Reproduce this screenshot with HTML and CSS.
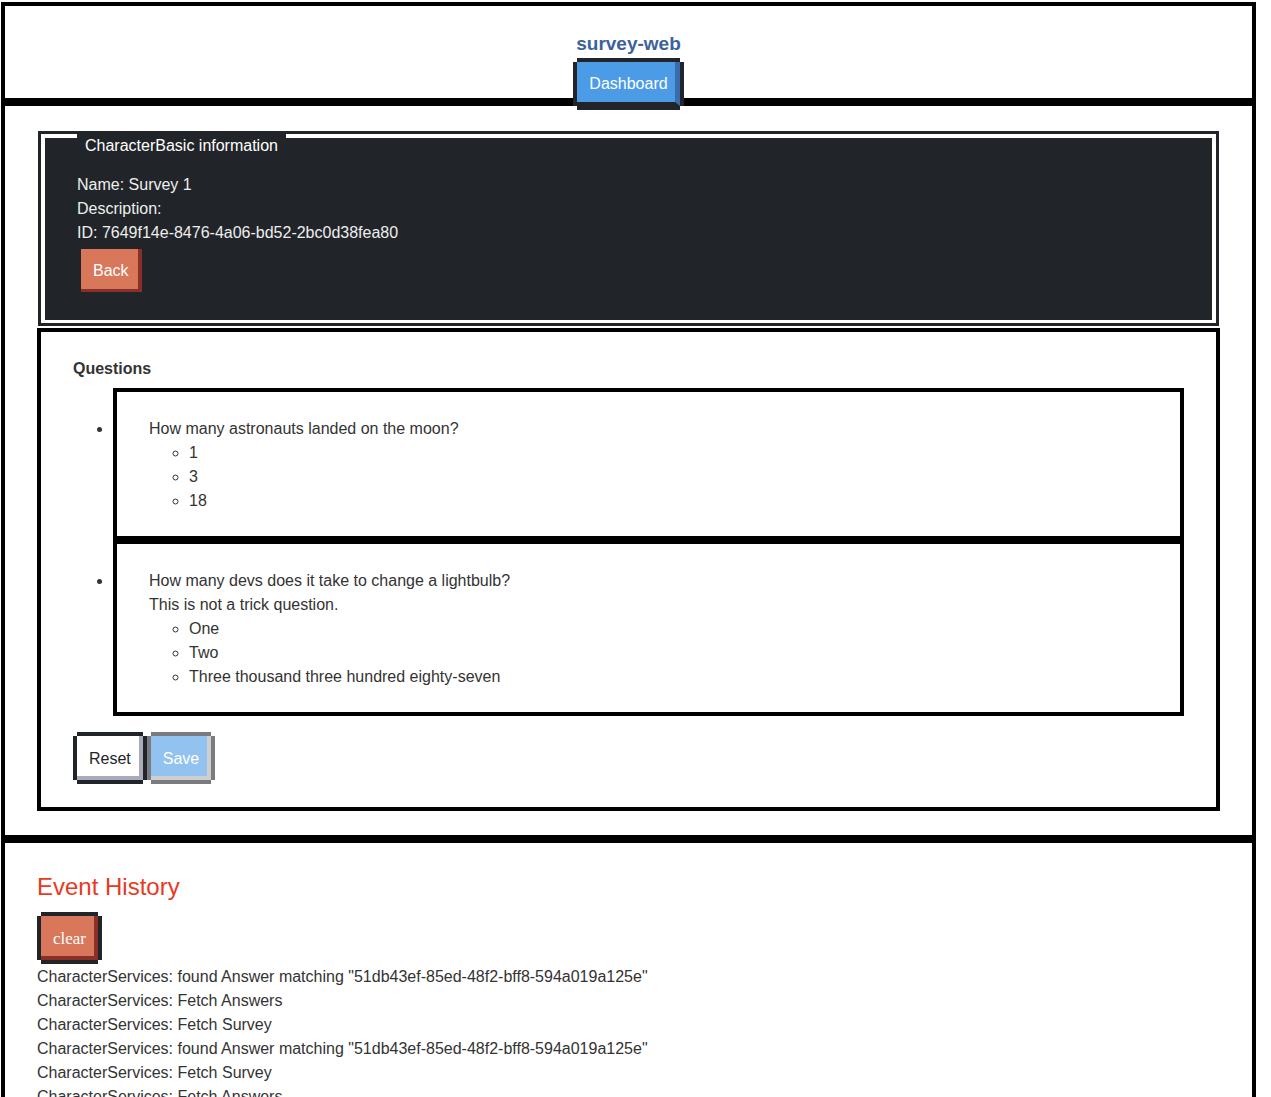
FILE: index.html
```html
<!DOCTYPE html>
<html lang="en">
<head>
<meta charset="utf-8">
<title>survey-web</title>
<link rel="stylesheet" href="styles.css">
</head>
<body>
<div class="page">
  <header class="section header">
    <div class="app-title">survey-web</div>
    <button class="btn btn-blue btn-nav">Dashboard</button>
  </header>

  <main class="section main">
    <div class="info-card">
      <div class="info-inner">
        <div class="legend">CharacterBasic information</div>
        <div class="line">Name: Survey 1</div>
        <div class="line">Description:</div>
        <div class="line">ID: 7649f14e-8476-4a06-bd52-2bc0d38fea80</div>
        <button class="btn btn-orange btn-back">Back</button>
      </div>
    </div>

    <div class="questions">
      <div class="questions-title">Questions</div>
      <ul class="q-list">
        <li>
          <div class="q-box">
            <div class="line">How many astronauts landed on the moon?</div>
            <ul class="a-list">
              <li>1</li>
              <li>3</li>
              <li>18</li>
            </ul>
          </div>
        </li>
        <li>
          <div class="q-box">
            <div class="line">How many devs does it take to change a lightbulb?</div>
            <div class="line">This is not a trick question.</div>
            <ul class="a-list">
              <li>One</li>
              <li>Two</li>
              <li>Three thousand three hundred eighty-seven</li>
            </ul>
          </div>
        </li>
      </ul>
      <div class="actions">
        <button class="btn btn-white">Reset</button>
        <button class="btn btn-blue btn-disabled" disabled>Save</button>
      </div>
    </div>
  </main>

  <section class="section events">
    <h2 class="events-title">Event History</h2>
    <button class="btn btn-orange btn-clear">clear</button>
    <div class="log">
      <div class="line">CharacterServices: found Answer matching "51db43ef-85ed-48f2-bff8-594a019a125e"</div>
      <div class="line">CharacterServices: Fetch Answers</div>
      <div class="line">CharacterServices: Fetch Survey</div>
      <div class="line">CharacterServices: found Answer matching "51db43ef-85ed-48f2-bff8-594a019a125e"</div>
      <div class="line">CharacterServices: Fetch Survey</div>
      <div class="line">CharacterServices: Fetch Answers</div>
      <div class="line">CharacterServices: Fetch Survey</div>
      <div class="line">CharacterServices: Fetch Answers</div>
    </div>
  </section>
</div>
</body>
</html>
```

FILE: styles.css
```css
html, body {
  margin: 0;
  padding: 0;
  background: #fff;
}
body {
  padding-top: 2px;
  font-family: "Liberation Sans", Arial, Helvetica, sans-serif;
  font-size: 16px;
  line-height: 24px;
  color: #333;
}
.page {
  width: 1255px;
  margin-left: 1px;
}
.section {
  border: 4px solid #000;
}
.line {
  line-height: 24px;
}

/* header */
.header {
  height: 92px;
  box-sizing: content-box;
  text-align: center;
}
.app-title {
  padding-top: 27px;
  font-size: 19px;
  font-weight: bold;
  line-height: 22px;
  color: #3b6299;
}

/* buttons */
.btn {
  display: inline-block;
  vertical-align: top;
  box-sizing: border-box;
  margin: 0;
  height: 44px;
  padding: 4px 8px 0 12px;
  border: 0;
  border-right: 4px solid transparent;
  border-bottom: 4px solid transparent;
  font-family: inherit;
  font-size: 16px;
  line-height: 36px;
  box-shadow: 0 -4px 0 0 #212529, -4px 0 0 0 #212529, 4px 0 0 0 #212529, 0 4px 0 0 #212529;
  cursor: pointer;
}
.btn-nav {
  margin-top: 7px;
  padding-right: 7px;
  border-right-width: 5px;
}
.btn-blue {
  background: #4b9be6;
  color: #fff;
  border-right-color: #3a6cac;
  border-bottom-color: #212529;
}
.btn-orange {
  background: #d9775b;
  color: #fff;
  border-right-color: #8b3026;
  border-bottom-color: #8b3026;
}
.btn-white {
  background: #fff;
  color: #212529;
  border-right-color: #a9abba;
  border-bottom-color: #a9abba;
  margin-left: 4px;
  padding-top: 6px;
  line-height: 34px;
}
.btn-disabled {
  opacity: 0.6;
  border-right-color: #aeaeae;
  border-bottom-color: #aeaeae;
  padding-top: 6px;
  line-height: 34px;
  cursor: default;
}

/* main */
.main {
  padding: 25px 32px 24px;
}
.info-card {
  margin: 0 1px 2px;
  border: 3px solid #212529;
}
.info-inner {
  background: #212529;
  border: 4px solid #fff;
  border-bottom-width: 3px;
  padding: 0 32px 28px;
  color: #eeeeee;
}
.legend {
  display: table;
  margin: -4px 0 16px 0;
  padding: 1px 8px 0;
  line-height: 22px;
  background: #212529;
  color: #fff;
}
.btn-back {
  margin-top: 4px;
  margin-left: 4px;
  padding-right: 9px;
  border-bottom-width: 3px;
  height: 43px;
}

.questions {
  border: 4px solid #000;
  padding: 25px 32px 27px;
}
.questions-title {
  font-weight: bold;
  line-height: 24px;
}
.q-list {
  margin: 7px 0 20px;
  padding-left: 40px;
  list-style: disc;
}
.q-box {
  border: 4px solid #000;
  padding: 25px 32px 23px;
}
.a-list {
  margin: 0;
  padding-left: 40px;
  list-style: circle;
}
.actions {
  display: flex;
  gap: 8px;
}

/* events */
.events {
  padding: 0 32px 24px;
}
.events-title {
  margin: 30px 0 15px;
  font-size: 24px;
  font-weight: normal;
  line-height: 28px;
  color: #e8391f;
}
.btn-clear {
  margin-left: 4px;
  padding-top: 6px;
  line-height: 34px;
  font-family: "Liberation Serif", "Times New Roman", serif;
  font-size: 17px;
}
.log {
  margin-top: 5px;
}
```
